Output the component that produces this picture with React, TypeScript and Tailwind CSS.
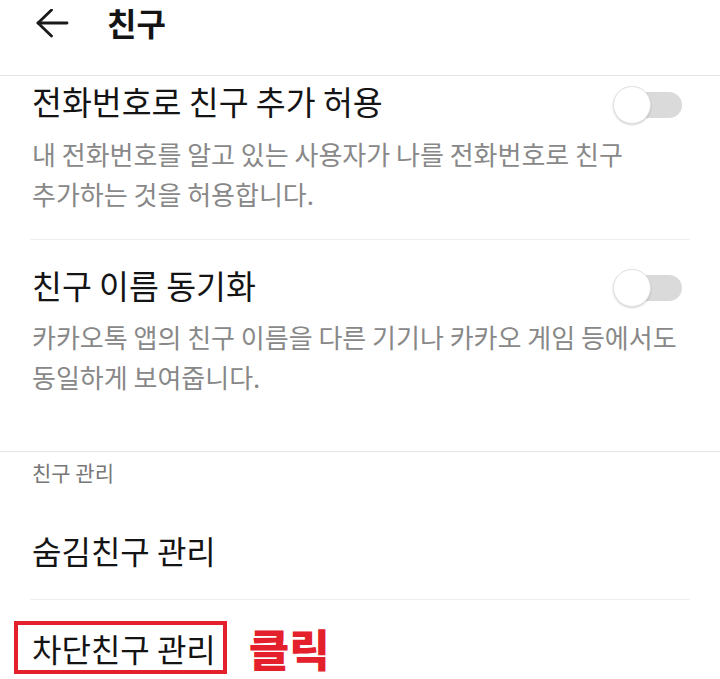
import React from 'react'

const font = { fontFamily: '"Noto Sans CJK KR", "Noto Sans", sans-serif' }

function Toggle({ offset }: { offset: string }) {
  return (
    <div className={`relative h-[38px] w-[69px] shrink-0 ${offset}`}>
      <div className="absolute right-0 top-[6px] h-[26px] w-[62px] rounded-full bg-[#dadada]" />
      <div className="absolute left-0 top-0 h-[38px] w-[38px] rounded-full border border-[#e2e2e2] bg-white shadow-[0_1px_2px_rgba(0,0,0,0.18)]" />
    </div>
  )
}

function SettingBlock({
  title,
  lines,
  top,
  gap,
  toggleOffset,
}: {
  title: string
  lines: string[]
  top: string
  gap: string
  toggleOffset: string
}) {
  return (
    <div className={top}>
      <div className="flex items-start justify-between pl-[2px] pr-[8px]">
        <p className="text-[32.5px] leading-[40px] text-[#141414]">{title}</p>
        <Toggle offset={toggleOffset} />
      </div>
      <div className={`${gap} pl-[2px] text-[26px] leading-[40px] text-[#888888]`}>
        {lines.map((l) => (
          <p key={l} className="whitespace-nowrap">{l}</p>
        ))}
      </div>
    </div>
  )
}

export default function App() {
  return (
    <div className="h-[679px] w-[720px] overflow-hidden bg-white" style={font}>
      <header className="h-[76px] border-b border-[#e4e4e4]">
        <div className="flex items-start">
          <svg
            className="ml-[36px] mt-[9px]"
            width="33"
            height="30"
            viewBox="0 0 33 30"
            fill="none"
            stroke="#1a1a1a"
            strokeWidth="2.8"
            strokeLinecap="round"
            strokeLinejoin="round"
          >
            <path d="M2 14h29" />
            <path d="M15.5 1 2 14l13.5 13" />
          </svg>
          <h1 className="ml-[38px] text-[32px] font-bold leading-[44px] text-[#141414]">친구</h1>
        </div>
      </header>

      <div className="border-b border-[#e6e6e6] pb-[54px]">
        <div className="mx-[30px] border-b border-[#efefef] pb-[25px]">
          <SettingBlock
            top="pt-[5px]"
            gap="mt-[10px]"
            toggleOffset="mt-[5px]"
            title="전화번호로 친구 추가 허용"
            lines={['내 전화번호를 알고 있는 사용자가 나를 전화번호로 친구', '추가하는 것을 허용합니다.']}
          />
        </div>
        <div className="mx-[30px]">
          <SettingBlock
            top="pt-[25px]"
            gap="mt-[10px]"
            toggleOffset="mt-[4px]"
            title="친구 이름 동기화"
            lines={['카카오톡 앱의 친구 이름을 다른 기기나 카카오 게임 등에서도', '동일하게 보여줍니다.']}
          />
        </div>
      </div>

      <p className="ml-[32px] pt-[5px] text-[21px] leading-[30px] text-[#777777]">친구 관리</p>

      <div className="mx-[30px] mt-[43px] border-b border-[#efefef] pb-[29px]">
        <p className="pl-[2px] text-[32px] leading-[40px] text-[#141414]">숨김친구 관리</p>
      </div>

      <div className="mx-[30px] mt-[21px] flex items-start">
        <div className="ml-[-16px] inline-flex h-[53px] items-center border-[4px] border-[#e3202b] pl-[14px] pr-[7px]">
          <span className="text-[32px] leading-[40px] text-[#141414]">차단친구 관리</span>
        </div>
        <span className="ml-[22px] mt-[1px] text-[44px] font-black leading-[52px] text-[#e3202b]">클릭</span>
      </div>
    </div>
  )
}
